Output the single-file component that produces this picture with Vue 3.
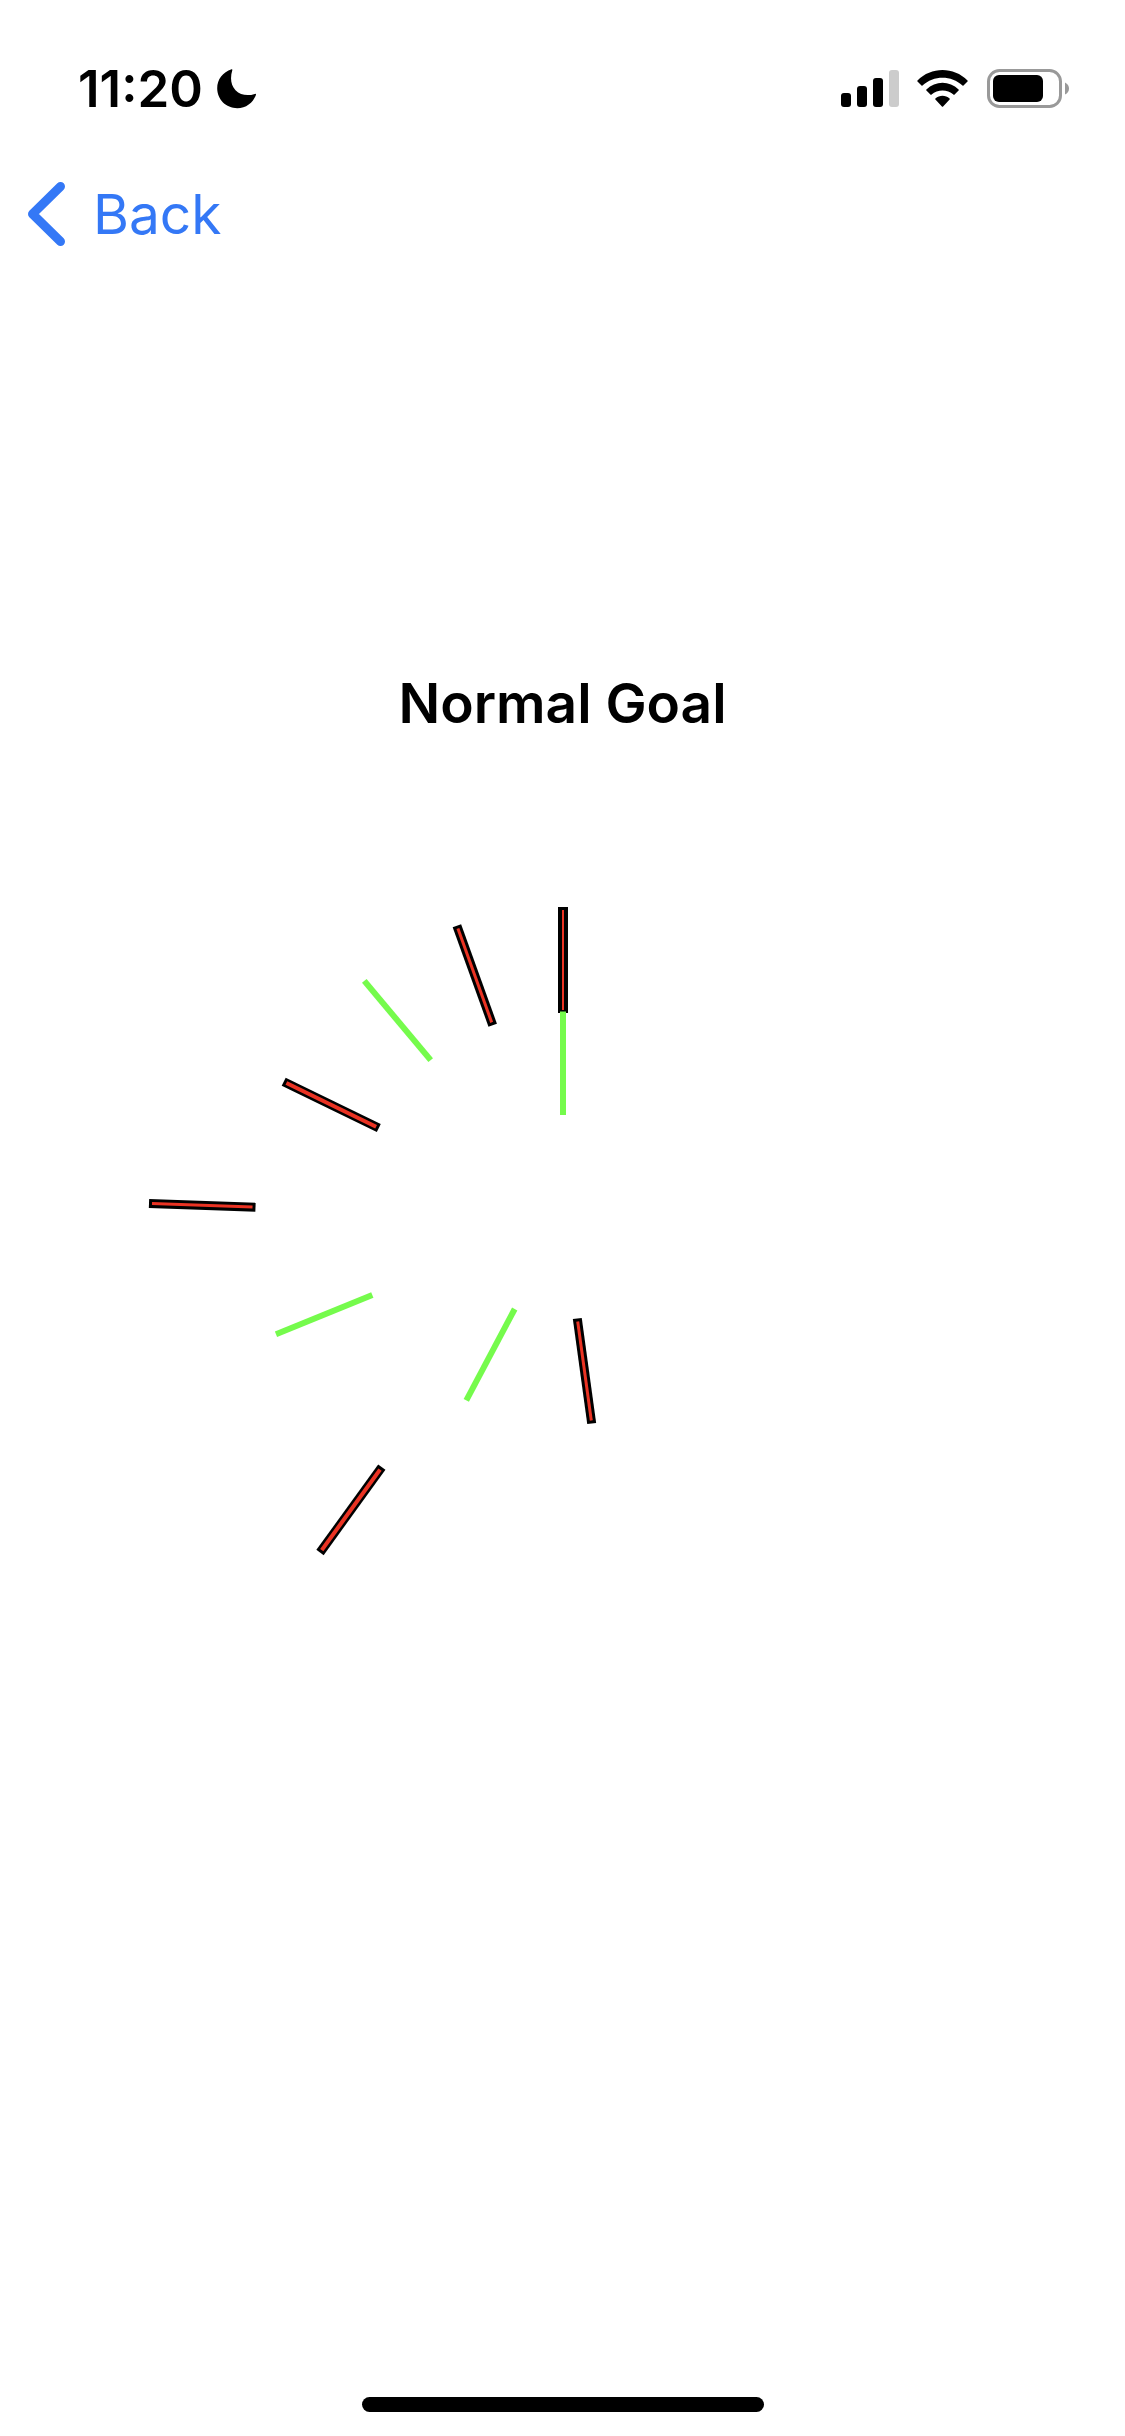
<script setup>
const misses = [
  { x1: 432, y1: 7, x2: 432, y2: 113, width: 10, core: 2 },
  { x1: 325.9, y1: 25.7, x2: 361.7, y2: 125.2, width: 9, core: 3 },
  { x1: 152.7, y1: 181.7, x2: 247.8, y2: 228, width: 9, core: 4 },
  { x1: 18, y1: 303.4, x2: 124.5, y2: 307.2, width: 9, core: 3 },
  { x1: 250.8, y1: 567.2, x2: 189, y2: 652.5, width: 9, core: 4 },
  { x1: 446.3, y1: 418.5, x2: 460.7, y2: 523.5, width: 9, core: 3 },
]

const hits = [
  { x1: 432, y1: 111.5, x2: 432, y2: 215 },
  { x1: 233.3, y1: 80.8, x2: 299.7, y2: 160.2 },
  { x1: 145, y1: 434.2, x2: 241.3, y2: 395 },
  { x1: 383.7, y1: 409, x2: 335.3, y2: 500.3 },
]

// The red core stops short of both ends so the black outline closes around it.
function inset(line) {
  const dx = line.x2 - line.x1
  const dy = line.y2 - line.y1
  const k = 3 / Math.hypot(dx, dy)
  return {
    x1: line.x1 + dx * k,
    y1: line.y1 + dy * k,
    x2: line.x2 - dx * k,
    y2: line.y2 - dy * k,
  }
}
</script>

<template>
  <div class="screen">
    <header class="status">
      <div class="clock">
        <span class="time">11:20</span>
        <svg class="moon" width="40" height="40" viewBox="0 0 40 40" aria-hidden="true">
          <path d="M14.6 0.3Q15.7 0 15.3 1.3C13 9 13.7 16.300 18.500 21.200C23.500 26.200 30.500 27.200 37.800 24.900Q39.400 24.500 38.900 26C36 34 28.800 39.200 20.300 39.200C9 39.200 0.200 30.500 0.200 19.300C0.200 10.300 5.800 3.200 14.600 0.300Z" />
        </svg>
      </div>
      <div class="indicators">
        <svg width="58" height="38" viewBox="0 0 58 38" aria-hidden="true">
          <rect x="0" y="23" width="10" height="14" rx="3" />
          <rect x="16" y="16" width="10" height="21" rx="3" />
          <rect x="32" y="8" width="10" height="29" rx="3" />
          <rect x="48" y="0" width="10" height="37" rx="3" fill="#cccccc" />
        </svg>
        <svg width="52" height="38" viewBox="0 0 52 38" aria-hidden="true">
          <path d="M0.500 10.500C14 -3.500 37 -3.500 50.500 10.500Q51 11 50.500 11.500L46.500 15.500Q46 16 45.500 15.500C34.500 5 16.500 5 5.500 15.500Q5 16 4.500 15.500L0.500 11.500Q0 11 0.500 10.500Z" />
          <path d="M9.400 19.400C18.500 10.600 32.500 10.600 41.600 19.400Q42.200 20 41.600 20.600L37.600 24.600Q37 25.200 36.400 24.600C30.500 19 20.500 19 14.600 24.600Q14 25.200 13.400 24.600L9.400 20.600Q8.800 20 9.400 19.400Z" />
          <path d="M18.400 28.400C22.500 24.800 28.500 24.800 32.600 28.400Q33.200 29 32.600 29.600L26.100 36.400Q25.500 37 24.900 36.400L18.400 29.600Q17.800 29 18.400 28.400Z" />
        </svg>
        <svg width="82" height="40" viewBox="0 0 82 40" aria-hidden="true">
          <rect x="1.500" y="1.500" width="72" height="36" rx="11" fill="none" stroke="#999999" stroke-width="3" />
          <rect x="6" y="6" width="50" height="27" rx="6" />
          <path d="M78 13.500Q82 15.500 82 19.500Q82 23.500 78 25.500Z" fill="#999999" />
        </svg>
      </div>
    </header>

    <nav class="nav">
      <button type="button" class="back">
        <svg width="37" height="64" viewBox="0 0 37 64" aria-hidden="true">
          <path d="M32.500 4.500L4.500 32L32.500 59.500" />
        </svg>
        <span>Back</span>
      </button>
    </nav>

    <main class="content">
      <h1 class="title">Normal Goal</h1>
      <svg class="chart" viewBox="0 0 863 660" role="img" aria-label="Normal Goal">
        <g v-for="(line, i) in misses" :key="'miss' + i">
          <line class="outline" :x1="line.x1" :y1="line.y1" :x2="line.x2" :y2="line.y2" :stroke-width="line.width" />
          <line class="core" v-bind="inset(line)" :stroke-width="line.core" />
        </g>
        <line v-for="(line, i) in hits" :key="'hit' + i" class="hit" v-bind="line" />
      </svg>
    </main>

    <footer class="home">
      <div class="home-bar"></div>
    </footer>
  </div>
</template>

<style>
body {
  margin: 0;
  background: #ffffff;
}
</style>

<style scoped>
.screen {
  display: flex;
  flex-direction: column;
  min-height: 100vh;
  background: #ffffff;
  color: #000000;
  font-family: Inter, "Liberation Sans", sans-serif;
}

.status {
  display: flex;
  justify-content: space-between;
  align-items: center;
  box-sizing: border-box;
  height: 132px;
  padding: 46px 56px 0 78px;
}

.clock,
.indicators {
  display: flex;
  align-items: center;
}

.clock {
  gap: 14px;
}

.indicators {
  gap: 18px;
}

.time {
  font-size: 51px;
  line-height: 60px;
  font-weight: 600;
}

.nav {
  display: flex;
  align-items: center;
  height: 164px;
  padding: 0 28px;
}

.back {
  display: flex;
  align-items: center;
  gap: 28px;
  padding: 0;
  border: 0;
  background: none;
  color: #3478f6;
  font-family: inherit;
  font-size: 55px;
  line-height: 80px;
  cursor: pointer;
}

.back path {
  fill: none;
  stroke: currentColor;
  stroke-width: 9;
  stroke-linecap: round;
  stroke-linejoin: round;
}

.content {
  display: flex;
  flex-direction: column;
  align-items: center;
  padding-top: 367px;
}

.title {
  margin: 0;
  font-size: 55px;
  line-height: 80px;
  font-weight: 600;
}

.chart {
  width: 100%;
  max-width: 863px;
  margin-top: 157px;
}

.outline {
  stroke: #000000;
}

.core {
  stroke: #ea3323;
}

.hit {
  stroke: #75fb4c;
  stroke-width: 6;
}

.home {
  display: flex;
  justify-content: center;
  margin-top: auto;
  padding-bottom: 24px;
}

.home-bar {
  width: 402px;
  height: 15px;
  border-radius: 8px;
  background: #000000;
}
</style>
